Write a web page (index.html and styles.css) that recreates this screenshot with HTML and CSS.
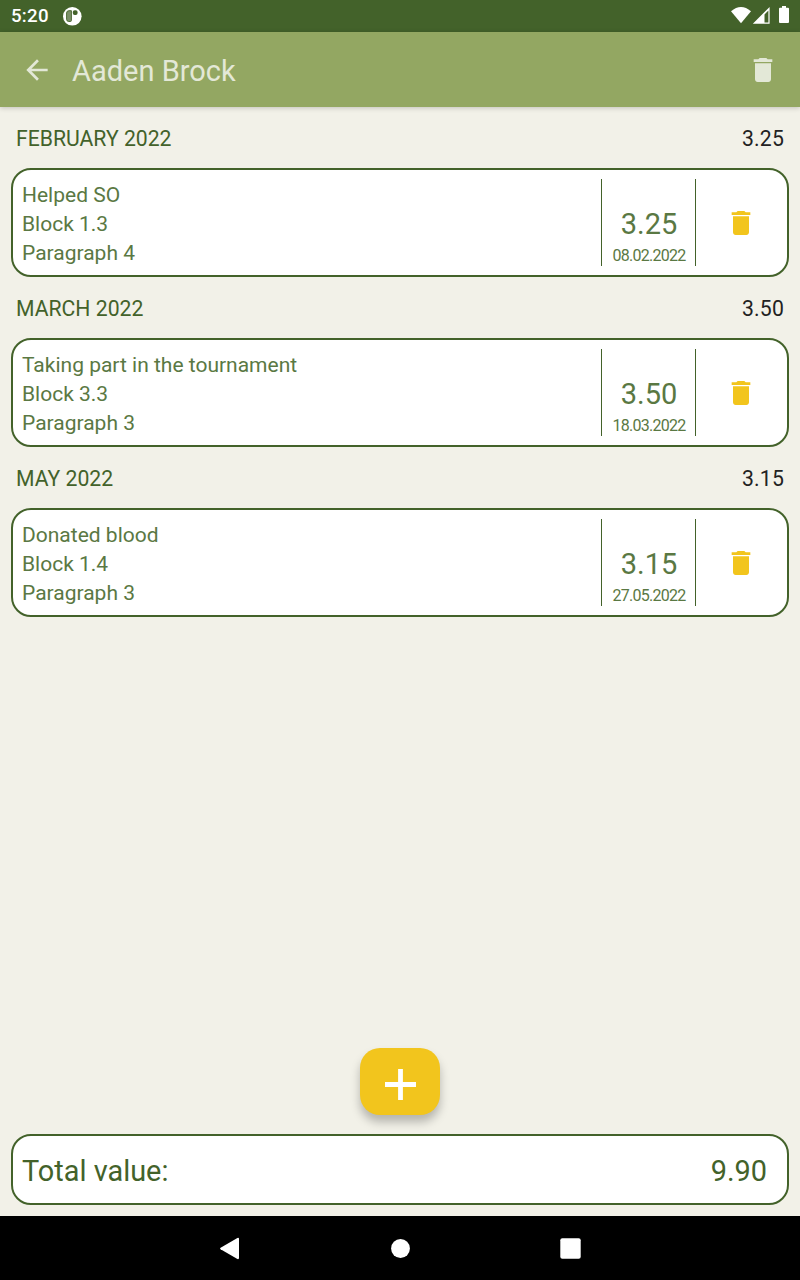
FILE: index.html
```html
<!DOCTYPE html>
<html lang="en">
<head>
<meta charset="utf-8">
<title>Aaden Brock</title>
<link rel="stylesheet" href="styles.css">
</head>
<body>
<svg width="0" height="0" class="defs">
  <symbol id="trash" viewBox="0 0 24 24"><path d="M6 19c0 1.100.9 2 2 2h8c1.100 0 2-.9 2-2V7H6v12zM19 4h-3.500l-1-1h-5l-1 1H5v2h14V4z"/></symbol>
</svg>
<div class="screen">
  <div class="status">
    <span class="clock">5:20</span>
    <svg class="notif" width="20" height="20" viewBox="0 0 20 20"><circle cx="10.300" cy="10.300" r="9.300" fill="#fff"/><path d="M9.400 4.700H7Q4.600 4.700 4.600 7V13.200Q4.600 15.500 6.800 15.500H8.400Q9.400 15.500 9.400 14.400Z" fill="#7b9069" stroke="#4d6a36" stroke-width="1"/><rect x="10.800" y="4.200" width="4.800" height="4.800" rx="1.900" fill="#43622a"/></svg>
    <svg class="signals" width="60" height="20" viewBox="0 0 60 20" fill="#fff"><path d="M1 5.200Q11 -3.400 21 5.200L11 17.200Z"/><path d="M39.600 1V17.700H22.800ZM38.400 4.600L34.500 8.400V16.400H38.400Z" fill-rule="evenodd"/><path d="M52 0h4v1.700h2q1 0 1 1v13.300q0 1-1 1h-8q-1 0-1-1V2.700q0-1 1-1h2z"/></svg>
  </div>
  <header class="appbar">
    <svg class="back" width="32" height="32" viewBox="0 0 24 24"><path fill="currentColor" d="M20 11H7.830l5.590-5.590L12 4l-8 8 8 8 1.410-1.410L7.830 13H20v-2z"/></svg>
    <h1 class="title">Aaden Brock</h1>
    <svg class="icon"><use href="#trash"/></svg>
  </header>
  <main class="list">
    <div class="month"><span>FEBRUARY 2022</span><span class="sum">3.25</span></div>
    <section class="card">
      <div class="info"><div>Helped SO</div><div>Block 1.3</div><div>Paragraph 4</div></div>
      <div class="score"><div class="value">3.25</div><div class="date">08.02.2022</div></div>
      <div class="action"><svg class="icon"><use href="#trash"/></svg></div>
    </section>
    <div class="month"><span>MARCH 2022</span><span class="sum">3.50</span></div>
    <section class="card">
      <div class="info"><div>Taking part in the tournament</div><div>Block 3.3</div><div>Paragraph 3</div></div>
      <div class="score"><div class="value">3.50</div><div class="date">18.03.2022</div></div>
      <div class="action"><svg class="icon"><use href="#trash"/></svg></div>
    </section>
    <div class="month"><span>MAY 2022</span><span class="sum">3.15</span></div>
    <section class="card">
      <div class="info"><div>Donated blood</div><div>Block 1.4</div><div>Paragraph 3</div></div>
      <div class="score"><div class="value">3.15</div><div class="date">27.05.2022</div></div>
      <div class="action"><svg class="icon"><use href="#trash"/></svg></div>
    </section>
  </main>
  <button class="fab" aria-label="Add"><svg width="31" height="31" viewBox="0 0 31 31"><path d="M15.500 0V31M0 15.500H31" stroke="#fff" stroke-width="4.800"/></svg></button>
  <div class="total"><span>Total value:</span><span class="amount">9.90</span></div>
  <nav class="nav">
    <svg width="24" height="24" viewBox="0 0 24 24" fill="#fff"><path d="M2.600 11.700L19.400 2Q21 1.500 21 2.900V22.100Q21 23.500 19.400 23L2.600 13.300Q1.400 12.500 2.600 11.700Z"/></svg>
    <svg width="24" height="24" viewBox="0 0 24 24" fill="#fff"><circle cx="12.500" cy="12.500" r="9.400"/></svg>
    <svg width="24" height="24" viewBox="0 0 24 24" fill="#fff"><rect x="2.300" y="2.300" width="20.400" height="20.400" rx="2"/></svg>
  </nav>
</div>
</body>
</html>
```
FILE: styles.css
```css
* { box-sizing: border-box; }
body { margin: 0; font-family: Roboto, sans-serif; }
.defs { float: left; }
.screen { width: 800px; height: 1280px; display: flex; flex-direction: column; background: #f2f1e8; overflow: hidden; }
.status { height: 32px; flex: none; display: flex; align-items: flex-start; background: #43622a; color: #fff; padding: 6px 10px 0 11px; }
.clock { font-size: 18.670px; font-weight: 500; line-height: 21px; width: 51px; letter-spacing: .25px; }
.signals { margin-left: auto; }
.appbar { height: 75px; flex: none; display: flex; align-items: center; padding: 0 21px 0 21px; background: #93a762; color: #e3e8d7; box-shadow: 0 1px 5px rgba(0, 0, 0, .2); }
.title { margin: 3px 0 0 19px; flex: 1; font-size: 29px; font-weight: 400; line-height: 34px; }
.icon { width: 32px; height: 32px; fill: currentColor; display: block; }
.list { flex: 1; padding: 0 11px; }
.month { height: 61px; display: flex; justify-content: space-between; align-items: center; padding: 2px 5px 0; font-size: 21.200px; line-height: 25px; color: #43622a; }
.sum { color: #222; letter-spacing: .2px; }
.card { height: 109px; display: flex; padding: 9px; border: 2px solid #43622a; border-radius: 20px; background: #fff; color: #5a7843; }
.info { flex: 1; font-size: 21px; line-height: 29px; padding-top: 2px; }
.score { width: 95px; border: solid #43622a; border-width: 0 1px; text-align: center; padding: 28px 0 0 1px; }
.value { font-size: 29px; line-height: 34px; }
.date { font-size: 16px; line-height: 19px; padding-top: 5px; letter-spacing: -.75px; }
.action { width: 82px; padding: 28px 0 0 29px; color: #f2c51d; }
.fab { align-self: center; flex: none; width: 80px; height: 67px; padding: 6px 0 0 1px; border: 0; border-radius: 20px; background: #f2c51d; box-shadow: 0 7px 10px rgba(0, 0, 0, .25); display: flex; align-items: center; justify-content: center; }
.total { flex: none; height: 71px; margin: 19px 11px 11px; padding: 3px 20px 0 9px; border: 2px solid #43622a; border-radius: 20px; background: #fff; color: #43622a; display: flex; justify-content: space-between; align-items: center; font-size: 28.900px; }
.nav { flex: none; height: 64px; background: #000; display: flex; justify-content: center; align-items: center; gap: 146px; }
```
